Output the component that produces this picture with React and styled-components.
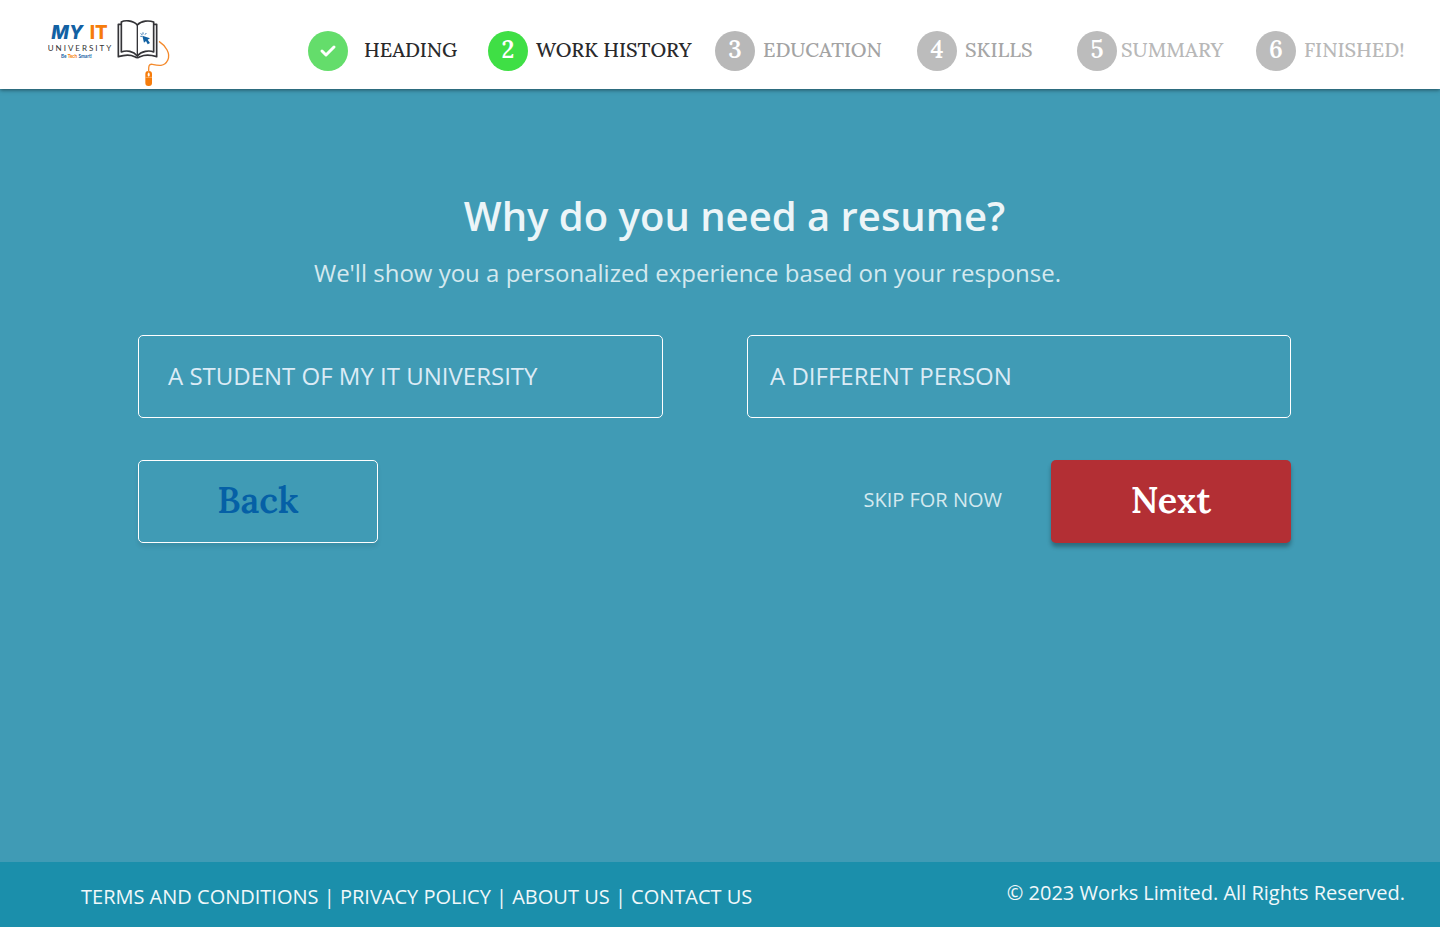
import React from "react";
import styled, { createGlobalStyle } from "styled-components";

const sans = `"Open Sans", "Noto Sans", sans-serif`;
const serif = `Lora, "Liberation Serif", serif`;

const GlobalStyle = createGlobalStyle`
  *, *::before, *::after { box-sizing: border-box; }
  body { margin: 0; background: #409bb5; font-family: ${sans}; }
  button { font: inherit; cursor: pointer; }
`;

const Page = styled.div`
  min-height: 100vh;
  display: flex;
  flex-direction: column;
`;

const Header = styled.header`
  display: flex;
  align-items: center;
  min-height: 89px;
  padding: 0 33px 0 48px;
  background: #fff;
  box-shadow: 0 1px 4px rgba(0, 0, 0, 0.5);
`;

const HomeLink = styled.a`
  display: block;
  flex: 0 0 124px;
  height: 70px;
  margin-top: 16px;
  margin-right: 136px;
`;

const Steps = styled.ol`
  flex: 1;
  display: grid;
  grid-template-columns: 180fr 227fr 202fr 160fr 179fr 151fr;
  margin: 0;
  padding: 13px 0 0;
  list-style: none;
`;

const Step = styled.li`
  display: flex;
  align-items: center;
  gap: ${(p) => p.$gap}px;
  color: ${(p) => p.$color};
  font-family: ${serif};
  font-size: 20px;
  font-weight: 500;
  line-height: 24px;
  white-space: nowrap;
`;

const StepLabel = styled.span`
  padding-bottom: 2px;
`;

const Badge = styled.span`
  flex: none;
  display: flex;
  align-items: center;
  justify-content: center;
  width: 40px;
  height: 40px;
  border-radius: 50%;
  background: ${(p) => p.$fill};
  color: #fff;
  font-size: 24px;
  font-weight: 600;
  line-height: 36px;
  padding-bottom: ${(p) => (p.$done ? 0 : 2)}px;
`;

const Main = styled.main`
  flex: 1;
  padding: 99px 149px 48px 138px;
`;

const Title = styled.h1`
  margin: 0 0 12px;
  padding-left: 40px;
  color: #ecf5f8;
  font-size: 40px;
  font-weight: 600;
  line-height: 56px;
  text-align: center;
`;

const Subtitle = styled.p`
  margin: 0 0 46px;
  padding-right: 54px;
  color: #d4e9ef;
  font-size: 24px;
  line-height: 33px;
  text-align: center;
`;

const Options = styled.div`
  display: grid;
  grid-template-columns: 525fr 544fr;
  gap: 84px;
  margin-bottom: 42px;
`;

const Option = styled.button`
  min-height: 83px;
  padding: 0 ${(p) => p.$inset}px 2px;
  border: 1px solid #fff;
  border-radius: 5px;
  background: transparent;
  color: #dcebf6;
  && { font-size: 24px; }
  text-align: left;
`;

const Actions = styled.div`
  display: flex;
  align-items: center;
`;

const ActionButton = styled.button`
  width: 240px;
  height: 83px;
  padding: 0 0 4px;
  border: ${(p) => (p.$primary ? "0" : "1px solid #fff")};
  border-radius: 5px;
  background: ${(p) => (p.$primary ? "#b32f34" : "#409bb5")};
  color: ${(p) => (p.$primary ? "#fff" : "#0560a6")};
  box-shadow: 0 4px 4px rgba(0, 0, 0, ${(p) => (p.$primary ? 0.3 : 0.08)});
  && {
    font-family: ${serif};
    font-size: 36px;
    font-weight: 600;
  }
`;

const SkipButton = styled.button`
  margin: 0 49px 0 auto;
  padding: 0 0 4px;
  border: 0;
  background: none;
  color: #d4e9ef;
  && { font-size: 20px; }
`;

const Footer = styled.footer`
  display: flex;
  align-items: center;
  justify-content: space-between;
  min-height: 65px;
  padding: 0 35px 0 81px;
  background: #1b8fab;
  color: #f0f8fa;
  font-size: 20px;
  line-height: 28px;
`;

const FooterNav = styled.nav`
  padding-top: 4px;
`;

const FooterLink = styled.a`
  color: inherit;
  text-decoration: none;
`;

const Copyright = styled.p`
  margin: 0;
  padding-bottom: 4px;
`;

const LogoArt = styled.svg`
  display: block;
  width: 124px;
  height: 70px;

  text { font-family: Lato, "Open Sans", sans-serif; }
  .name { font-family: Inter, sans-serif; font-size: 56px; font-weight: 800; }
  .school { font-size: 24px; letter-spacing: 6px; }
  .motto { font-size: 14px; font-weight: 700; }
`;

function Logo() {
  return (
    <LogoArt viewBox="24 24 372 210" role="img" aria-label="My IT University">
      <text className="name" x="34" y="87" fill="#1261a3" fontStyle="italic">MY</text>
      <text className="name" x="149" y="87" fill="#f67c0b">IT</text>
      <text className="school" x="23" y="124" fill="#333">UNIVERSITY</text>
      <text className="motto" x="63" y="145" fill="#1261a3">
        Be <tspan fill="#f67c0b">Tech</tspan> Smart!
      </text>
      <g fill="none" stroke="#343438" strokeWidth="5" strokeLinejoin="round" strokeLinecap="round">
        <path d="M292 45 C278 29 252 31 244 36 V126 C260 120 280 123 292 138 C304 123 328 120 341 126 V36 C328 31 304 31 292 45 Z" />
        <path d="M292 45 V137" strokeWidth="4" />
        <path d="M242 43 H235 V140 C255 134 272 134 284 140 Q292 146 300 140 C314 134 330 134 350 140 V43 H343" />
      </g>
      <path d="M307 77 L330 85 L323 89 L330 99 L323 103 L318 93 L312 98 Z" fill="#1261a3" />
      <g stroke="#3a79b2" strokeWidth="3">
        <path d="M309 67 V73" />
        <path d="M302 70 L307 75" />
        <path d="M301 79 H307" />
        <path d="M319 69 L315 74" />
      </g>
      <path
        d="M357 94 C377 107 393 131 383 151 C374 171 354 167 337 163 C325 161 326 172 326 184"
        fill="none"
        stroke="#f48a2c"
        strokeWidth="4"
      />
      <rect x="316" y="183" width="20" height="45" rx="9" fill="#f67c0b" />
      <path d="M316 202 H336 M326 184 V202" stroke="#ffc48c" strokeWidth="2" />
      <rect x="323" y="189" width="6" height="10" rx="3" fill="#fff" />
    </LogoArt>
  );
}

function Check() {
  return (
    <svg width="40" height="40" viewBox="0 0 40 40" aria-label="Completed" role="img">
      <path
        d="M14 20 L18 24 L26 16"
        fill="none"
        stroke="#fff"
        strokeWidth="3"
        strokeLinecap="round"
        strokeLinejoin="round"
      />
    </svg>
  );
}

const steps = [
  { label: "HEADING", fill: "#64dd6b", color: "#2a2a2c", gap: 16, done: true },
  { label: "WORK HISTORY", fill: "#3fdf45", color: "#2a2a2c", gap: 8, current: true },
  { label: "EDUCATION", fill: "#b8b8b8", color: "#a3a3a3", gap: 8 },
  { label: "SKILLS", fill: "#bcbcbc", color: "#a6a6a6", gap: 8 },
  { label: "SUMMARY", fill: "#bcbcbc", color: "#b8b8b8", gap: 4 },
  { label: "FINISHED!", fill: "#bcbcbc", color: "#b8b8b8", gap: 8 },
];

const links = ["TERMS AND CONDITIONS", "PRIVACY POLICY", "ABOUT US", "CONTACT US"];

export default function App() {
  return (
    <Page>
      <GlobalStyle />
      <Header>
        <HomeLink href="#home">
          <Logo />
        </HomeLink>
        <Steps>
          {steps.map((s, i) => (
            <Step key={s.label} $gap={s.gap} $color={s.color} aria-current={s.current ? "step" : undefined}>
              <Badge $fill={s.fill} $done={s.done}>{s.done ? <Check /> : i + 1}</Badge>
              <StepLabel>{s.label}</StepLabel>
            </Step>
          ))}
        </Steps>
      </Header>
      <Main>
        <Title>Why do you need a resume?</Title>
        <Subtitle>We'll show you a personalized experience based on your response.</Subtitle>
        <Options>
          <Option type="button" $inset={29}>A STUDENT OF MY IT UNIVERSITY</Option>
          <Option type="button" $inset={22}>A DIFFERENT PERSON</Option>
        </Options>
        <Actions>
          <ActionButton type="button">Back</ActionButton>
          <SkipButton type="button">SKIP FOR NOW</SkipButton>
          <ActionButton type="button" $primary>Next</ActionButton>
        </Actions>
      </Main>
      <Footer>
        <FooterNav aria-label="Footer">
          {links.map((l, i) => (
            <React.Fragment key={l}>
              {i > 0 && " | "}
              <FooterLink href={"#" + l.toLowerCase().replaceAll(" ", "-")}>{l}</FooterLink>
            </React.Fragment>
          ))}
        </FooterNav>
        <Copyright>© 2023 Works Limited. All Rights Reserved.</Copyright>
      </Footer>
    </Page>
  );
}
